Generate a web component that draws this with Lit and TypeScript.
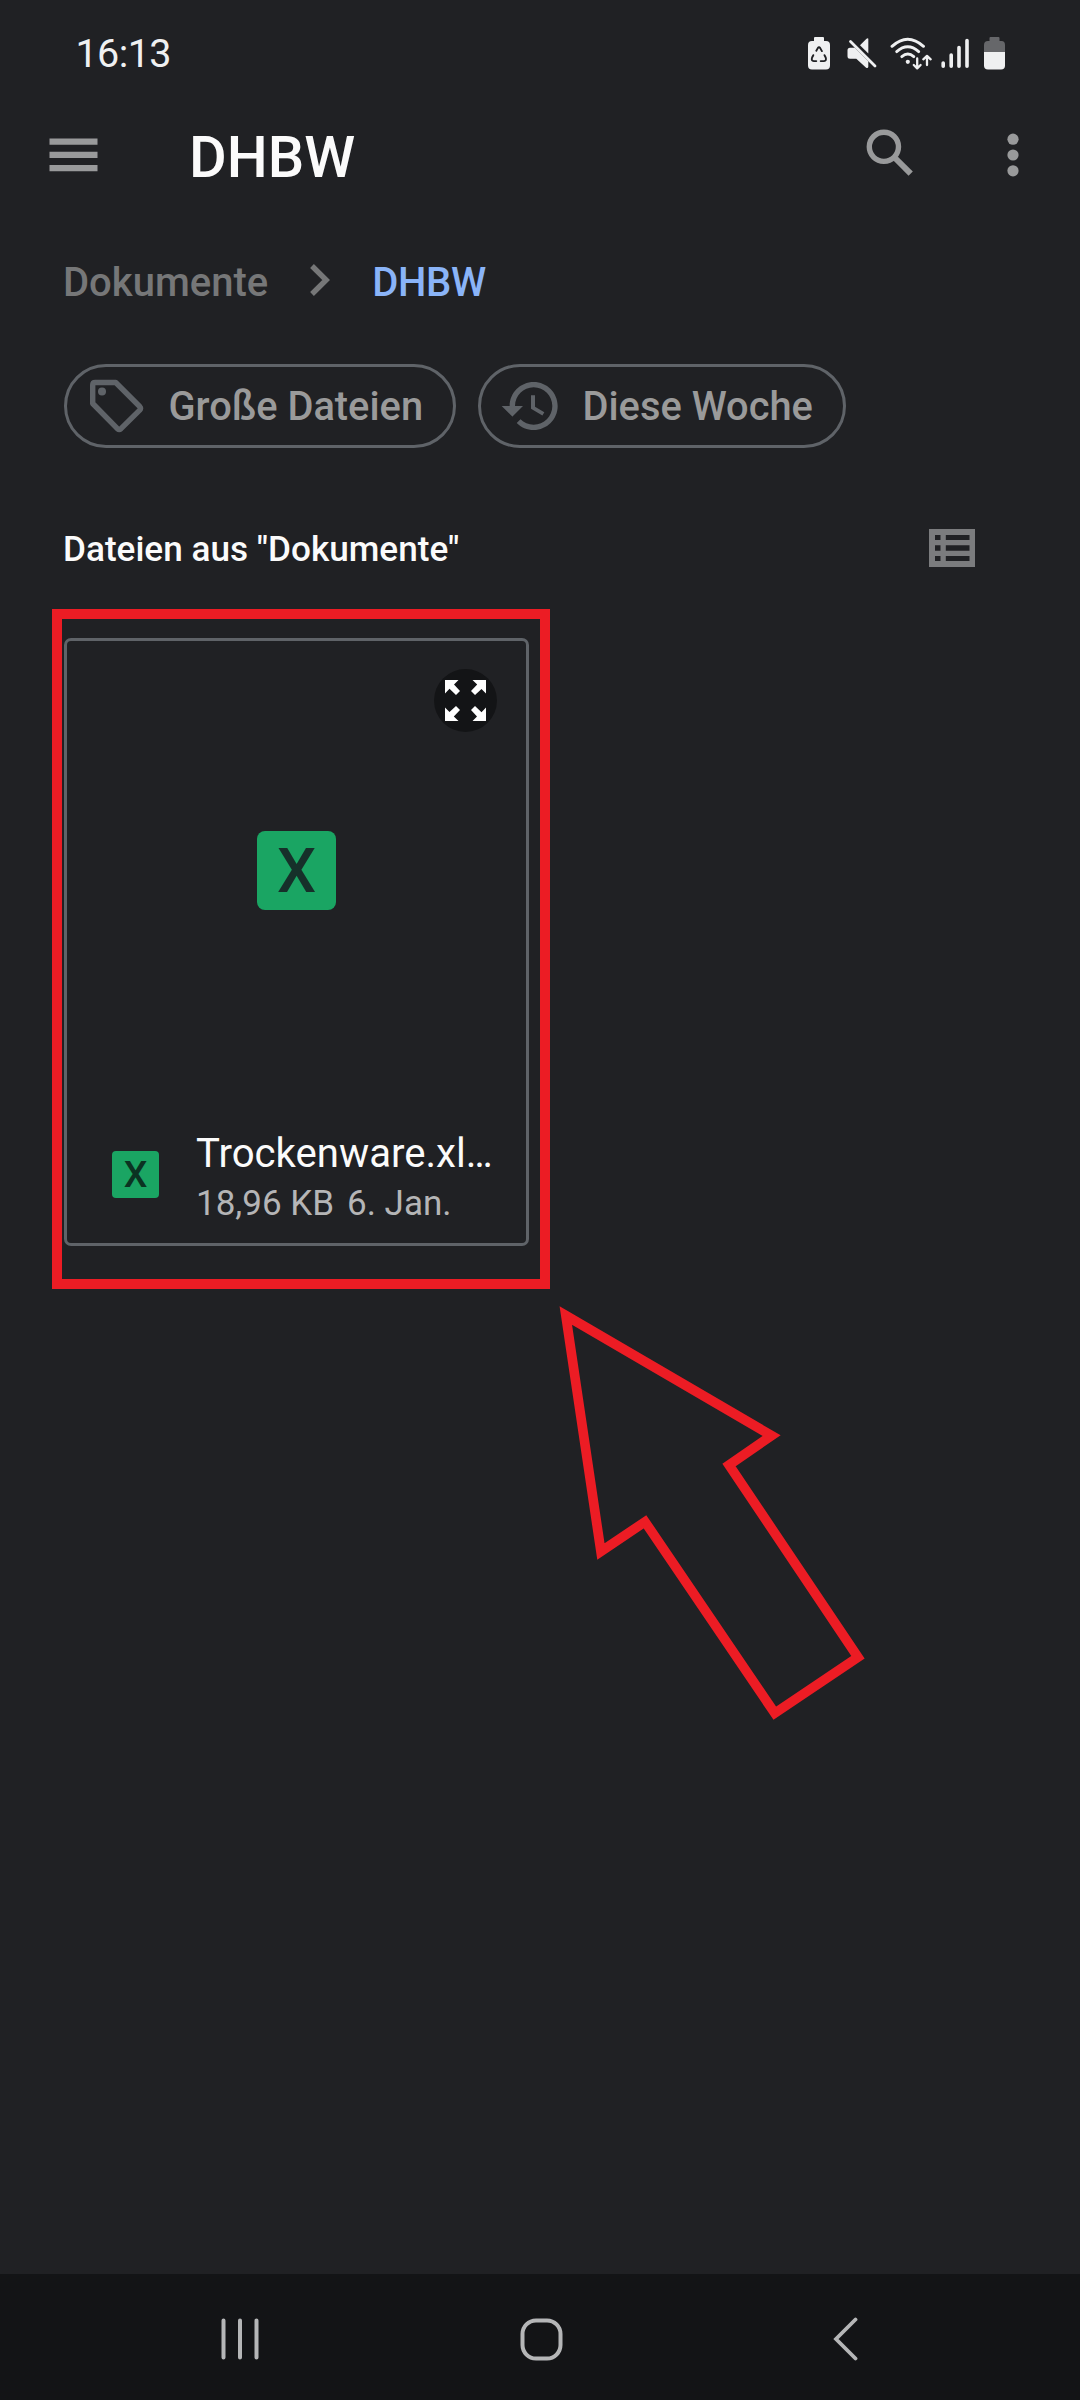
import { LitElement, html, css, svg } from "lit";
import { customElement, property } from "lit/decorators.js";

@customElement("xls-tile")
class XlsTile extends LitElement {
  static styles = css`
    :host { display: block; flex: none; }
    .tile { display: flex; align-items: center; justify-content: center; background: #1aa563; font-weight: 500; }
    .large { width: 79px; height: 79px; border-radius: 8px; font-size: 62px; line-height: 79px; color: #16302a; }
    .small { width: 47px; height: 47px; border-radius: 4px; font-size: 37.5px; line-height: 47px; color: #0b3322; }
  `;
  @property() size = "large";
  render() {
    return html`<div class="tile ${this.size}">X</div>`;
  }
}

@customElement("status-bar")
class StatusBar extends LitElement {
  static styles = css`
    :host { display: block; }
    .bar { box-sizing: border-box; height: 107px; padding: 0 75px 0 75.500px; display: flex; align-items: center; justify-content: space-between; color: #eff0f1; }
    .time { font-size: 39.500px; line-height: 47px; letter-spacing: -0.600px; }
    .icons { display: block; width: 197px; height: 33px; }
  `;
  render() {
    return html`<div class="bar">
      <span class="time">16:13</span>
      <svg class="icons" viewBox="808 37 197 33" fill="none" stroke-linecap="round" stroke-linejoin="round">
        <path fill="#eff0f1" d="M815 37h8q1 0 1 1v3h2q4 0 4 4v20.500q0 4-4 4h-14q-4 0-4-4V45q0-4 4-4h2v-3q0-1 1-1z" />
        <g stroke="#202124" stroke-width="1.900">
          <path d="M816.300 50.700l1.500-2.600q1.200-1.600 2.400 0l1.700 3" />
          <path d="M813.300 55.200l-1.200 2.300q-1.200 3.400 1.700 3.600h2.500" />
          <path d="M824.500 55.200l1.200 2.300q1 3.400-1.700 3.600h-3.300" />
        </g>
        <path fill="#eff0f1" d="M868.300 39v14.500l-8.300-8.300 6.500-6.500q1.800-1 1.800.300z" />
        <path fill="#eff0f1" d="M850 47.700h4.800l13.500 13.500v5.500q-.300 2.200-2.200 1l-9.800-8.900h-6.300q-2.500 0-2.500-2.500v-6q0-2.600 2.500-2.600z" />
        <path stroke="#eff0f1" stroke-width="2.800" d="M850.500 41.500L875 66" />
        <g stroke="#eff0f1" stroke-width="2.900">
          <path d="M892 46.300q15.700-14.200 31.500 0" />
          <path d="M896.700 51.600q11-9.600 22 0" />
          <path d="M901.800 56.600q6-5 12 0" />
          <path stroke-width="2.300" d="M917.200 58.500v9M913.800 65l3.400 3.300 3.400-3.300M927 65v-8.500M923.300 59.300l3.700-3.400 3.700 3.400" />
        </g>
        <circle cx="907.800" cy="61.800" r="2.100" fill="#eff0f1" />
        <path stroke="#eff0f1" stroke-width="3.600" d="M943.200 63v3.300M951.200 55v11.300M959 47.500v18.800M967 40.500v25.800" />
        <path fill="#66676a" d="M990.500 37h8q1 0 1 1v3h2q3.500 0 3.500 4v7.500h-21V45q0-4 4-4h1.500v-3q0-1 1-1z" />
        <path fill="#eff0f1" d="M984 52h21v13.500q0 4-4 4h-13q-4 0-4-4z" />
      </svg>
    </div>`;
  }
}

@customElement("file-card")
class FileCard extends LitElement {
  static styles = css`
    :host { display: block; }
    .card { box-sizing: border-box; position: relative; width: 465px; height: 608px; border: 3px solid #5f6368; border-radius: 7px; display: flex; flex-direction: column; }
    .preview { height: 459px; flex: none; display: flex; align-items: center; justify-content: center; }
    .zoom { position: absolute; right: 29px; top: 28px; width: 63px; height: 63px; }
    .meta { display: flex; padding: 0 0 0 45px; }
    .tile { margin-top: 51px; }
    .info { margin-left: 37px; padding-top: 30px; width: 300px; }
    .name { font-size: 40.150px; line-height: 47px; color: #fbfbfb; white-space: nowrap; }
    .details { font-size: 35px; line-height: 54px; color: #b5b5b6; white-space: nowrap; display: flex; gap: 13px; }
  `;
  render() {
    const arrow = svg`<path d="M-20.500-20.500h13.500l-4.500 4.500 6 6.500-4 4-6.500-6.200-4.500 4.700z" />`;
    return html`<div class="card">
      <div class="preview"><xls-tile size="large"></xls-tile></div>
      <svg class="zoom" viewBox="-31.500 -31.500 63 63">
        <circle r="31.500" fill="#131416" />
        <g fill="#fff">
          ${[0, 90, 180, 270].map((a) => svg`<g transform="rotate(${a})">${arrow}</g>`)}
        </g>
      </svg>
      <div class="meta">
        <xls-tile class="tile" size="small"></xls-tile>
        <div class="info">
          <div class="name">Trockenware.xl…</div>
          <div class="details"><span>18,96 KB</span><span>6. Jan.</span></div>
        </div>
      </div>
    </div>`;
  }
}

@customElement("app-root")
class AppRoot extends LitElement {
  static styles = css`
    :host { display: block; font-family: Roboto, "Liberation Sans", sans-serif; }
    .screen { position: relative; width: 1080px; height: 2400px; background: #202124; display: flex; flex-direction: column; overflow: hidden; }
    svg { display: block; flex: none; }
    .appbar { height: 95px; box-sizing: border-box; padding: 0 61.500px 0 49px; display: flex; align-items: center; }
    .title { margin: 4px 0 0 91px; flex: 1; font-size: 57.800px; line-height: 68px; font-weight: 500; color: #fbfbfb; }
    .menu { width: 49px; height: 34px; }
    .search { width: 47px; height: 48px; margin: 0 94px 4px 0; }
    .dots { width: 12px; height: 44px; }
    .crumbs { height: 156px; box-sizing: border-box; padding: 0 62px 0 63px; display: flex; align-items: center; font-size: 40px; line-height: 48px; font-weight: 500; }
    .parent { color: #767778; margin-top: 6px; }
    .chevron { width: 20px; height: 32px; margin: 0 42px; }
    .current { color: #8ab4f8; margin-top: 6px; letter-spacing: -0.300px; }
    .chips { margin-top: 6px; padding-left: 64px; display: flex; gap: 22px; }
    .chip { box-sizing: border-box; height: 84px; border: 3px solid #5f6368; border-radius: 42px; display: flex; align-items: center; padding: 0 0 0 18px; font-size: 39.800px; font-weight: 500; color: #9a9a9a; white-space: nowrap; }
    .size { width: 392px; }
    .week { width: 368px; }
    .chip svg { width: 64px; height: 64px; margin-right: 19.500px; }
    .section { height: 190px; box-sizing: border-box; padding: 9px 105px 0 63px; display: flex; align-items: center; justify-content: space-between; font-size: 35.150px; line-height: 42px; font-weight: 500; color: #fbfbfb; }
    .section span { margin-top: 3px; }
    .list { width: 46px; height: 38px; }
    .files { flex: 1; padding-left: 64px; }
    .nav { height: 126px; flex: none; background: #131416; display: flex; align-items: center; padding: 4px 222px 0 221px; box-sizing: border-box; justify-content: space-between; }
    .recents { width: 38px; height: 42px; }
    .home { width: 43px; height: 43px; margin-left: -9px; }
    .back { width: 25px; height: 44px; }
    .frame { position: absolute; box-sizing: border-box; left: 52px; top: 609px; width: 498px; height: 680px; border: 10px solid #ec1c24; }
    .pointer { position: absolute; left: 550px; top: 1290px; width: 330px; height: 440px; }
  `;
  render() {
    return html`<div class="screen">
      <status-bar></status-bar>
      <header class="appbar">
        <svg class="menu" viewBox="0 0 49 34" fill="#999a9b"><path d="M.5.500h48v6.300H.500zM.5 13.700h48v6.300H.500zM.5 26.900h48v6.300H.500z" /></svg>
        <div class="title">DHBW</div>
        <svg class="search" viewBox="866 129 47 48" fill="none" stroke="#999a9b" stroke-width="5.400">
          <circle cx="883.900" cy="146.800" r="14.600" />
          <path stroke-width="6" d="M895.500 158.500L910.700 173.700" />
        </svg>
        <svg class="dots" viewBox="0 0 12 44" fill="#999a9b"><circle cx="6" cy="6.200" r="5.600" /><circle cx="6" cy="22" r="5.600" /><circle cx="6" cy="37.800" r="5.600" /></svg>
      </header>
      <nav class="crumbs">
        <span class="parent">Dokumente</span>
        <svg class="chevron" viewBox="0 0 20 32" fill="none" stroke="#767778" stroke-width="5.400"><path d="M2 2L16.200 16 2 30" /></svg>
        <span class="current">DHBW</span>
      </nav>
      <div class="chips">
        <div class="chip size">
          <svg viewBox="85 374 64 64" fill="none" stroke="#5f6368" stroke-width="5.400" stroke-linejoin="round">
            <path d="M92.700 385q0-2.500 2.500-2.500H115.700L139.700 406.500q1.600 1.800 0 3.600L121 428.700q-1.800 1.600-3.600 0L92.700 403.500z" />
            <circle cx="102" cy="391.500" r="4" fill="#5f6368" stroke="none" />
          </svg>
          <span>Große Dateien</span>
        </div>
        <div class="chip week">
          <svg viewBox="0 0 24 24" fill="#5f6368"><path d="M13 3c-4.970 0-9 4.030-9 9H1l3.890 3.890.070.140L9 12H6c0-3.870 3.130-7 7-7s7 3.130 7 7-3.130 7-7 7c-1.930 0-3.680-.790-4.940-2.060l-1.420 1.420C8.270 19.990 10.510 21 13 21c4.970 0 9-4.030 9-9s-4.030-9-9-9zm-1 5v5l4.280 2.540.720-1.210-3.500-2.080V8H12z" /></svg>
          <span>Diese Woche</span>
        </div>
      </div>
      <div class="section">
        <span>Dateien aus "Dokumente"</span>
        <svg class="list" viewBox="0 0 46 38" fill="#7b7c7e"><path fill-rule="evenodd" d="M0 0H46V38H0zM6 6v5h5.500V6zM6 16.300v5.400h5.500v-5.400zM6 27v5h5.500v-5zM16.800 6v5H40.500V6zM16.800 16.300v5.400H40.500v-5.400zM16.800 27v5H40.500v-5z" /></svg>
      </div>
      <main class="files"><file-card></file-card></main>
      <footer class="nav">
        <svg class="recents" viewBox="0 0 38 42" stroke="#b5b6b7" stroke-width="4" stroke-linecap="round"><path d="M2.500 2.500v37M19 2.500v37M35.500 2.500v37" /></svg>
        <svg class="home" viewBox="0 0 43 43" fill="none" stroke="#b5b6b7" stroke-width="4"><rect x="2.500" y="2.500" width="38" height="38" rx="13.500" /></svg>
        <svg class="back" viewBox="0 0 25 44" fill="none" stroke="#b5b6b7" stroke-width="3.800" stroke-linecap="round"><path d="M22.500 2.500L3 22 22.500 41.500" /></svg>
      </footer>
      <div class="frame"></div>
      <svg class="pointer" viewBox="550 1290 330 440" fill="none" stroke="#ec1c24" stroke-width="9.600" stroke-miterlimit="10">
        <path d="M565.800 1315.500L771.700 1435.600 729 1465 858 1657.200 774.800 1713.200 645 1521.800 600.900 1551.500z" />
      </svg>
    </div>`;
  }
}
